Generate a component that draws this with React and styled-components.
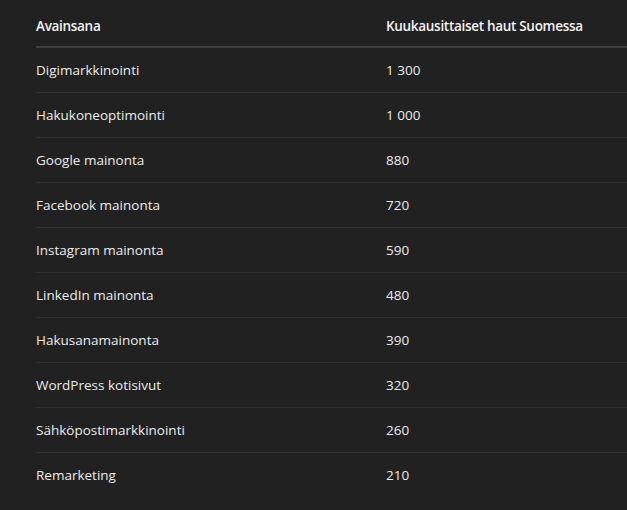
import React from 'react';
import styled, { createGlobalStyle } from 'styled-components';

const rows = [
  ['Digimarkkinointi', '1 300'],
  ['Hakukoneoptimointi', '1 000'],
  ['Google mainonta', '880'],
  ['Facebook mainonta', '720'],
  ['Instagram mainonta', '590'],
  ['LinkedIn mainonta', '480'],
  ['Hakusanamainonta', '390'],
  ['WordPress kotisivut', '320'],
  ['Sähköpostimarkkinointi', '260'],
  ['Remarketing', '210'],
];

const GlobalStyle = createGlobalStyle`
  html, body {
    margin: 0;
    padding: 0;
    background: #212121;
  }
  body {
    font-family: "Open Sans", "Noto Sans", sans-serif;
    color: #ececec;
    -webkit-font-smoothing: antialiased;
  }
`;

const Page = styled.div`
  width: 627px;
  height: 510px;
  overflow: hidden;
  background: #212121;
  padding-left: 36px;
  box-sizing: border-box;
`;

const Table = styled.table`
  width: 620px;
  border-collapse: collapse;
  font-size: 13.5px;
`;

const HeadCell = styled.th`
  text-align: left;
  font-weight: 600;
  color: #f3f3f3;
  height: 40px;
  padding: 6px 0 0;
  letter-spacing: -0.3px;
  width: ${(p) => p.$w || 'auto'};
  border-bottom: 2px solid #3e3e3e;
  vertical-align: middle;
`;

const Row = styled.tr`
  border-bottom: ${(p) => (p.$last ? 'none' : '1px solid #2f2f2f')};
`;

const Cell = styled.td`
  padding: 0;
  height: 44px;
  color: #ececec;
  vertical-align: middle;
`;

export default function App() {
  return (
    <Page>
      <GlobalStyle />
      <Table>
        <thead>
          <tr>
            <HeadCell $w="350px">Avainsana</HeadCell>
            <HeadCell>Kuukausittaiset haut Suomessa</HeadCell>
          </tr>
        </thead>
        <tbody>
          {rows.map(([k, v], i) => (
            <Row key={k} $last={i === rows.length - 1}>
              <Cell>{k}</Cell>
              <Cell>{v}</Cell>
            </Row>
          ))}
        </tbody>
      </Table>
    </Page>
  );
}
